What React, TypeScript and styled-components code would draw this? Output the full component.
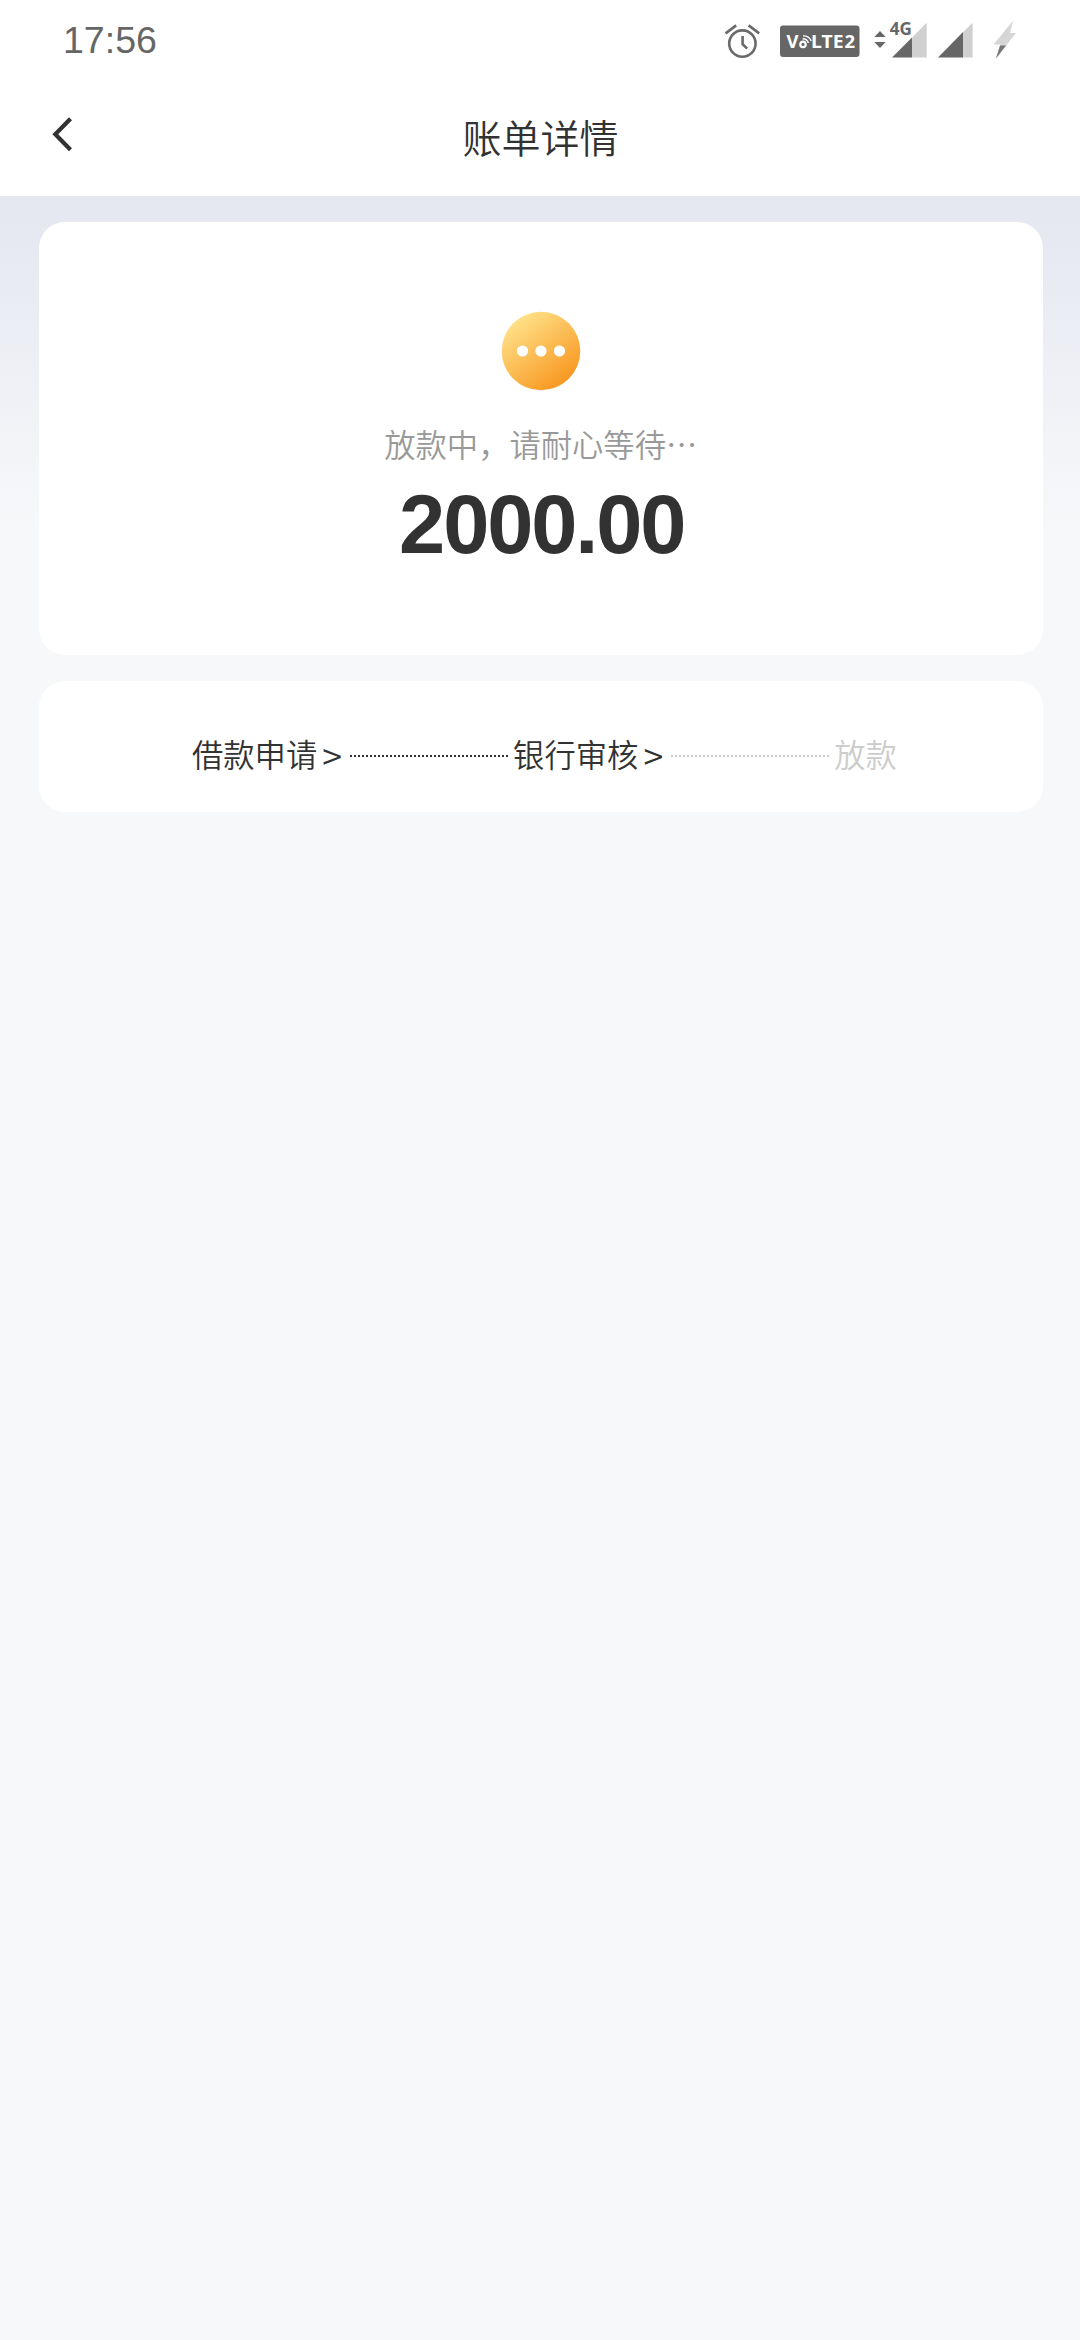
import React from "react";
import styled, { createGlobalStyle } from "styled-components";

const Global = createGlobalStyle`
  html, body { margin: 0; padding: 0; background: #f7f8fa; }
  * { box-sizing: border-box; }
`;

const Page = styled.div`
  width: 1080px;
  height: 2340px;
  overflow: hidden;
  display: flex;
  flex-direction: column;
  background: #f7f8fa;
  color: #323232;
  font-family: "Liberation Sans", "Noto Sans CJK SC", sans-serif;
`;

const StatusBar = styled.div`
  height: 80px;
  flex: none;
  display: flex;
  justify-content: space-between;
  background: #fff;
  padding: 0 60px 0 63px;
`;

const Clock = styled.div`
  font-size: 37.5px;
  line-height: 42px;
  padding-top: 19px;
  color: #666;
`;

const Icons = styled.svg`
  display: block;
  width: 310px;
  height: 80px;
`;

const Header = styled.header`
  height: 116px;
  flex: none;
  display: grid;
  grid-template-columns: 120px 1fr 120px;
  background: #fff;
`;

const BackButton = styled.button`
  display: flex;
  align-items: flex-start;
  border: 0;
  padding: 36px 0 0 50px;
  background: none;
`;

const Title = styled.h1`
  margin: 0;
  padding: 27px 0 0 1px;
  text-align: center;
  font: 350 39px/58px "Noto Sans CJK SC DemiLight", "Noto Sans CJK SC", sans-serif;
`;

const Content = styled.main`
  flex: 1;
  display: flex;
  flex-direction: column;
  gap: 26.5px;
  padding: 26px 37.5px 0 39px;
  background: linear-gradient(#e5e8f1 0, #e6e9f1 50px, #f7f8fa 330px);
`;

const Card = styled.section<{ $height: number }>`
  height: ${(p) => p.$height}px;
  border-radius: 26px;
  background: #fff;
`;

const Summary = styled(Card)`
  display: flex;
  flex-direction: column;
  align-items: center;
  padding-top: 89px;
`;

const Message = styled.p`
  margin: 30px 0 0;
  color: #999;
  white-space: nowrap;
  font: 350 31.3px/46px "Noto Sans CJK SC DemiLight", "Noto Sans CJK SC", sans-serif;
`;

const Amount = styled.strong`
  margin-top: 11px;
  padding-left: 2px;
  font-size: 83px;
  line-height: 94px;
  letter-spacing: -2.1px;
`;

const Steps = styled(Card)`
  display: flex;
  align-items: center;
  padding: 15px 0 0 153px;
`;

const Step = styled.div<{ $muted?: boolean }>`
  display: flex;
  align-items: center;
  color: ${(p) => (p.$muted ? "#ccc" : "#323232")};
  white-space: nowrap;
  font: 350 31.3px/46px "Noto Sans CJK SC DemiLight", "Noto Sans CJK SC", sans-serif;
`;

const Arrow = styled.span`
  display: flex;
  justify-content: center;
  width: 19px;
  margin-left: 5.5px;
  font-size: 36px;
  font-weight: 300;
`;

const Connector = styled.i<{ $muted?: boolean }>`
  width: 158px;
  margin: 4px 5.4px 0 8px;
  border-top: 2px dotted ${(p) => (p.$muted ? "#ccc" : "#323232")};
`;

function StatusIcons() {
  return (
    <Icons viewBox="710 0 310 80">
      <g fill="none" stroke="#6a6a6a" strokeWidth="2.6">
        <circle cx="742.4" cy="43.6" r="13.2" />
        <path d="M742.6 36v8.2l4.6 4.4M725.6 33.4l10.6-8M748.6 25.4l10.6 8" />
      </g>
      <rect x="780" y="25.5" width="79.5" height="31.5" rx="3" fill="#666" />
      <g fill="#fff" fontFamily="Noto Sans" fontWeight="700" fontSize="17.2">
        <text x="786.5" y="48" textLength="12" lengthAdjust="spacingAndGlyphs">V</text>
        <text x="811" y="48" textLength="32.5" lengthAdjust="spacingAndGlyphs">LTE</text>
        <text x="844.5" y="48" textLength="10.6" lengthAdjust="spacingAndGlyphs">2</text>
      </g>
      <g fill="none" stroke="#fff">
        <circle cx="803" cy="44.4" r="2.7" strokeWidth="2.2" />
        <path d="M802.6 38.8a5.8 5.8 0 0 1 5.8 4.2M803 35.9a8.6 8.6 0 0 1 8.2 5" strokeWidth="1.4" />
      </g>
      <path d="M874.3 37l5.7-6 5.7 6zM874.3 42l5.7 6 5.7-6z" fill="#666" />
      <text x="889.7" y="35" fontSize="17" fontFamily="Noto Sans" fontWeight="700" fill="#666">4G</text>
      <path d="M912 37.5l14.7-14.7v34.7H912z" fill="#d0d0d0" />
      <path d="M892 57.5L912 37.5v20z" fill="#666" />
      <path d="M963 32.3l9.6-9.5v34.7H963z" fill="#d0d0d0" />
      <path d="M938 57.5L963 32v25.5z" fill="#666" />
      <path d="M1013.2 20.5L993.5 44.5h6.8L996 58.5l20-25.5h-6z" fill="#d6d6d6" />
      <path d="M1000 45.5H1006L996 58.5z" fill="#777" />
    </Icons>
  );
}

export default function App() {
  return (
    <Page>
      <Global />
      <StatusBar>
        <Clock>17:56</Clock>
        <StatusIcons />
      </StatusBar>
      <Header>
        <BackButton aria-label="返回">
          <svg width="30" height="38" viewBox="50 116 30 38">
            <path d="M70.5 118.7L55.3 134.3L70.5 149.8" fill="none" stroke="#323232" strokeWidth="4.2" />
          </svg>
        </BackButton>
        <Title>账单详情</Title>
      </Header>
      <Content>
        <Summary $height={432.5}>
          <svg width="80" height="80" viewBox="0 0 80 80">
            <defs>
              <linearGradient id="coin" x1="0.15" y1="0.1" x2="0.8" y2="0.95">
                <stop offset="0" stopColor="#ffe28a" />
                <stop offset="1" stopColor="#f8951d" />
              </linearGradient>
            </defs>
            <circle cx="40" cy="40" r="39.3" fill="url(#coin)" />
            <g fill="#fff">
              <circle cx="21.5" cy="40" r="5.6" />
              <circle cx="40" cy="40" r="5.6" />
              <circle cx="58.5" cy="40" r="5.6" />
            </g>
          </svg>
          <Message>放款中，请耐心等待⋯</Message>
          <Amount>2000.00</Amount>
        </Summary>
        <Steps $height={131}>
          <Step>借款申请<Arrow>&gt;</Arrow></Step>
          <Connector />
          <Step>银行审核<Arrow>&gt;</Arrow></Step>
          <Connector $muted />
          <Step $muted>放款</Step>
        </Steps>
      </Content>
    </Page>
  );
}
